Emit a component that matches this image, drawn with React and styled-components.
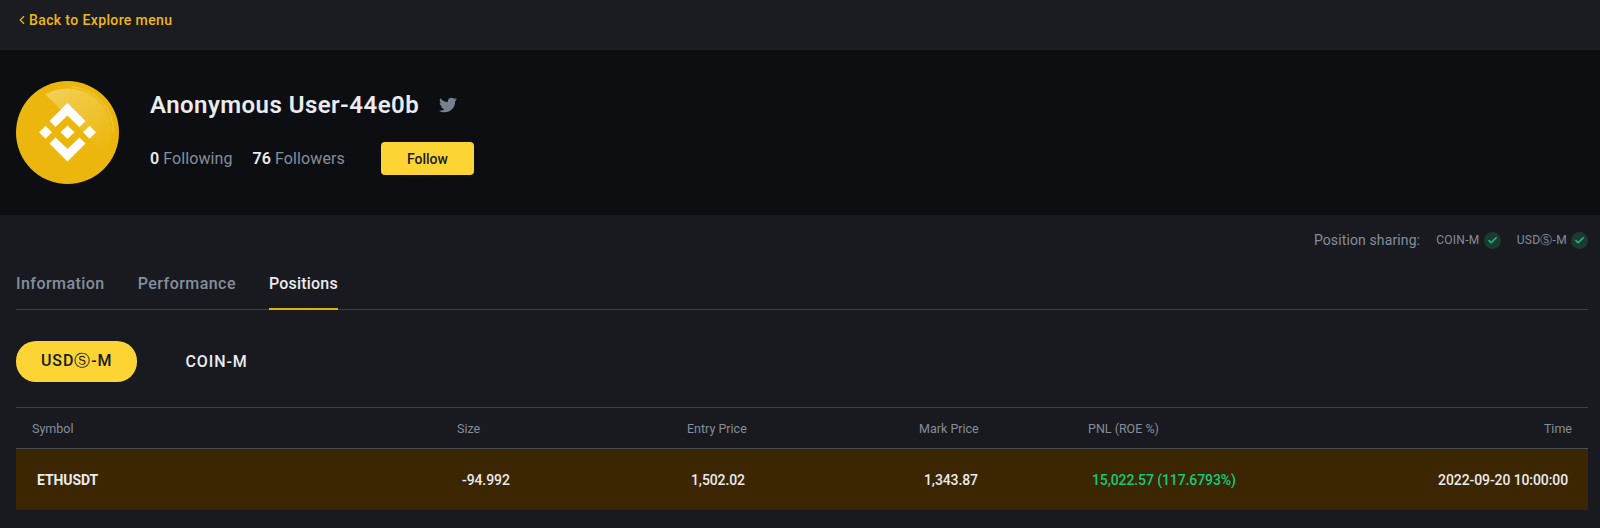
import React from 'react';
import styled, { createGlobalStyle } from 'styled-components';
import { Check, ChevronLeft } from 'lucide-react';
import { FaTwitter } from 'react-icons/fa';

const GlobalStyle = createGlobalStyle`
  html, body {
    margin: 0;
    background: #181a20;
    font-family: Roboto, "Noto Sans", sans-serif;
  }
`

const Page = styled.main`
  width: 1600px;
  height: 528px;
  overflow: hidden;
  background: #181a20;
`

const TopBar = styled.header`
  height: 50px;
  box-sizing: border-box;
  padding: 10px 16px 0 15px;
  background: #1a1c22;
`

const BackLink = styled.a`
  display: flex;
  align-items: center;
  gap: 0;
  color: #f0b90b;
  font-size: 14px;
  font-weight: 500;
  line-height: 20px;
  letter-spacing: 0.38px;
`

const Profile = styled.section`
  display: flex;
  align-items: center;
  height: 165px;
  box-sizing: border-box;
  padding: 0 16px;
  background: #0c0e12;
`

const Avatar = styled.div`
  width: 103px;
  height: 103px;
  margin-right: 31px;
  flex: none;
`

const ProfileInfo = styled.div`
  display: flex;
  flex-direction: column;
  gap: 22px;
`

const NameRow = styled.div`
  display: flex;
  align-items: center;
  gap: 20px;
`

const Name = styled.h1`
  margin: 0;
  color: #eaecef;
  font-size: 24px;
  font-weight: 600;
  line-height: 30px;
  letter-spacing: 0.45px;
`

const StatsRow = styled.div`
  display: flex;
  align-items: center;
  height: 33px;
`

const Stat = styled.span`
  margin-right: 20px;
  color: #848e9c;
  font-size: 16px;
  letter-spacing: 0.1px;
  b {
    color: #eaecef;
    font-weight: 600;
    margin-right: 4px;
  }
`

const FollowButton = styled.button`
  width: 93px;
  height: 33px;
  margin-left: 16px;
  border: 0;
  border-radius: 4px;
  background: #fcd535;
  color: #181a20;
  font: 500 14px Roboto, sans-serif;
`

const Content = styled.section`
  padding: 0 12px 0 16px;
`

const SharingRow = styled.div`
  display: flex;
  justify-content: flex-end;
  align-items: center;
  height: 50px;
  color: #848e9c;
  font-size: 14px;
  letter-spacing: 0.12px;
`

const SharingItem = styled.span`
  display: flex;
  align-items: center;
  gap: 4px;
  margin-left: 16px;
  font-size: 12px;
  letter-spacing: 0.3px;
`

const CheckBadge = styled.span`
  display: flex;
  align-items: center;
  justify-content: center;
  width: 17px;
  height: 17px;
  border-radius: 50%;
  background: #1d3a32;
  color: #0ecb81;
`

const Tabs = styled.nav`
  display: flex;
  gap: 33px;
  height: 44px;
  border-bottom: 1px solid #3c3f45;
`

const Tab = styled.a`
  height: 45px;
  box-sizing: border-box;
  padding-top: 7px;
  color: ${p => (p.$active ? '#eaecef' : '#848e9c')};
  border-bottom: ${p => (p.$active ? '2px solid #e6ae08' : '0')};
  font-size: 16px;
  font-weight: 500;
  line-height: 24px;
  letter-spacing: ${p => (p.$active ? '0.2px' : '0.45px')};
`

const Pills = styled.div`
  display: flex;
  gap: 23px;
  margin-top: 31px;
`

const Pill = styled.button`
  height: 41px;
  padding: 0 25px;
  border: 0;
  border-radius: 20px;
  background: ${p => (p.$active ? '#fcd535' : 'transparent')};
  color: ${p => (p.$active ? '#181a20' : '#eaecef')};
  font: 500 16px Roboto, sans-serif;
  letter-spacing: 0.9px;
`

const Table = styled.div`
  margin-top: 25px;
  border-top: 1px solid #3c3f45;
`

const Row = styled.div`
  display: grid;
  grid-template-columns: 441px 230px 232px 169px 240px 1fr;
  align-items: center;
`

const HeadRow = styled(Row)`
  height: 40px;
  color: #848e9c;
  font-size: 12.5px;
  border-bottom: 1px solid #474d57;
`

const BodyRow = styled(Row)`
  height: 61px;
  background: #3c2601;
  color: #eaecef;
  font-size: 14px;
  font-weight: 500;
  letter-spacing: -0.1px;
`

const Cell = styled.div`
  padding: 0 ${p => p.$pr || 0}px 0 ${p => p.$pl || 0}px;
  text-align: ${p => p.$align || 'left'};
  font-weight: ${p => (p.$bold ? 700 : 'inherit')};
  color: ${p => p.$color || 'inherit'};
  white-space: nowrap;
`

function BinanceCoin() {
  return (
    <svg width="103" height="103" viewBox="0 0 103 103">
      <defs>
        <linearGradient id="coinLight" x1="0.35" y1="0" x2="0.85" y2="0.75">
          <stop offset="0" stopColor="#f3cf55" />
          <stop offset="1" stopColor="#ecb810" />
        </linearGradient>
        <clipPath id="coinFace">
          <circle cx="51.5" cy="51.5" r="44" />
        </clipPath>
      </defs>
      <circle cx="51.5" cy="51.5" r="51.500" fill="#ebb70f" />
      <circle cx="51.5" cy="51.5" r="46" fill="none" stroke="#f0c433" strokeWidth="1.500" strokeDasharray="90 300" strokeDashoffset="-220" />
      <circle cx="51.5" cy="51.5" r="44" fill="#ecb60c" />
      <path d="M16 0 L103 0 L103 87 Z" fill="url(#coinLight)" clipPath="url(#coinFace)" />
      <path fill="#fff" d="M51.5 22 L69.500 40 L63.500 46 L51.5 34.500 L39.500 46 L33.500 40 Z" />
      <path fill="#fff" d="M51.5 80.500 L69.500 62.500 L63.500 56.500 L51.5 68 L39.500 56.500 L33.500 62.500 Z" />
      <path fill="#fff" d="M51.5 44.500 L58.500 51.250 L51.500 58 L44.500 51.250 Z" />
      <path fill="#fff" d="M23 51.250 L29.500 44.750 L36 51.250 L29.500 57.750 Z" />
      <path fill="#fff" d="M67 51.250 L73.500 44.750 L80 51.250 L73.500 57.750 Z" />
    </svg>
  )
}

function App() {
  return (
    <Page>
      <GlobalStyle />
      <TopBar>
        <BackLink><ChevronLeft size={14} />Back to Explore menu</BackLink>
      </TopBar>

      <Profile>
        <Avatar><BinanceCoin /></Avatar>
        <ProfileInfo>
          <NameRow>
            <Name>Anonymous User-44e0b</Name>
            <FaTwitter size={18} color="#76808f" />
          </NameRow>
          <StatsRow>
            <Stat><b>0</b>Following</Stat>
            <Stat><b>76</b>Followers</Stat>
            <FollowButton>Follow</FollowButton>
          </StatsRow>
        </ProfileInfo>
      </Profile>

      <Content>
        <SharingRow>
          <span>Position sharing:</span>
          <SharingItem>COIN-M<CheckBadge><Check size={11} strokeWidth={3} /></CheckBadge></SharingItem>
          <SharingItem>USDⓈ-M<CheckBadge><Check size={11} strokeWidth={3} /></CheckBadge></SharingItem>
        </SharingRow>

        <Tabs>
          <Tab>Information</Tab>
          <Tab>Performance</Tab>
          <Tab $active>Positions</Tab>
        </Tabs>

        <Pills>
          <Pill $active>USDⓈ-M</Pill>
          <Pill>COIN-M</Pill>
        </Pills>

        <Table>
          <HeadRow>
            <Cell $pl={16}>Symbol</Cell>
            <Cell>Size</Cell>
            <Cell>Entry Price</Cell>
            <Cell>Mark Price</Cell>
            <Cell>PNL (ROE %)</Cell>
            <Cell $align="right" $pr={16}>Time</Cell>
          </HeadRow>
          <BodyRow>
            <Cell $pl={21} $bold>ETHUSDT</Cell>
            <Cell $pl={5}>-94.992</Cell>
            <Cell $pl={4}>1,502.02</Cell>
            <Cell $pl={5}>1,343.87</Cell>
            <Cell $pl={4} $color="#0ecb81">15,022.57 (117.6793%)</Cell>
            <Cell $align="right" $pr={20}>2022-09-20 10:00:00</Cell>
          </BodyRow>
        </Table>
      </Content>
    </Page>
  )
}

export default App;
